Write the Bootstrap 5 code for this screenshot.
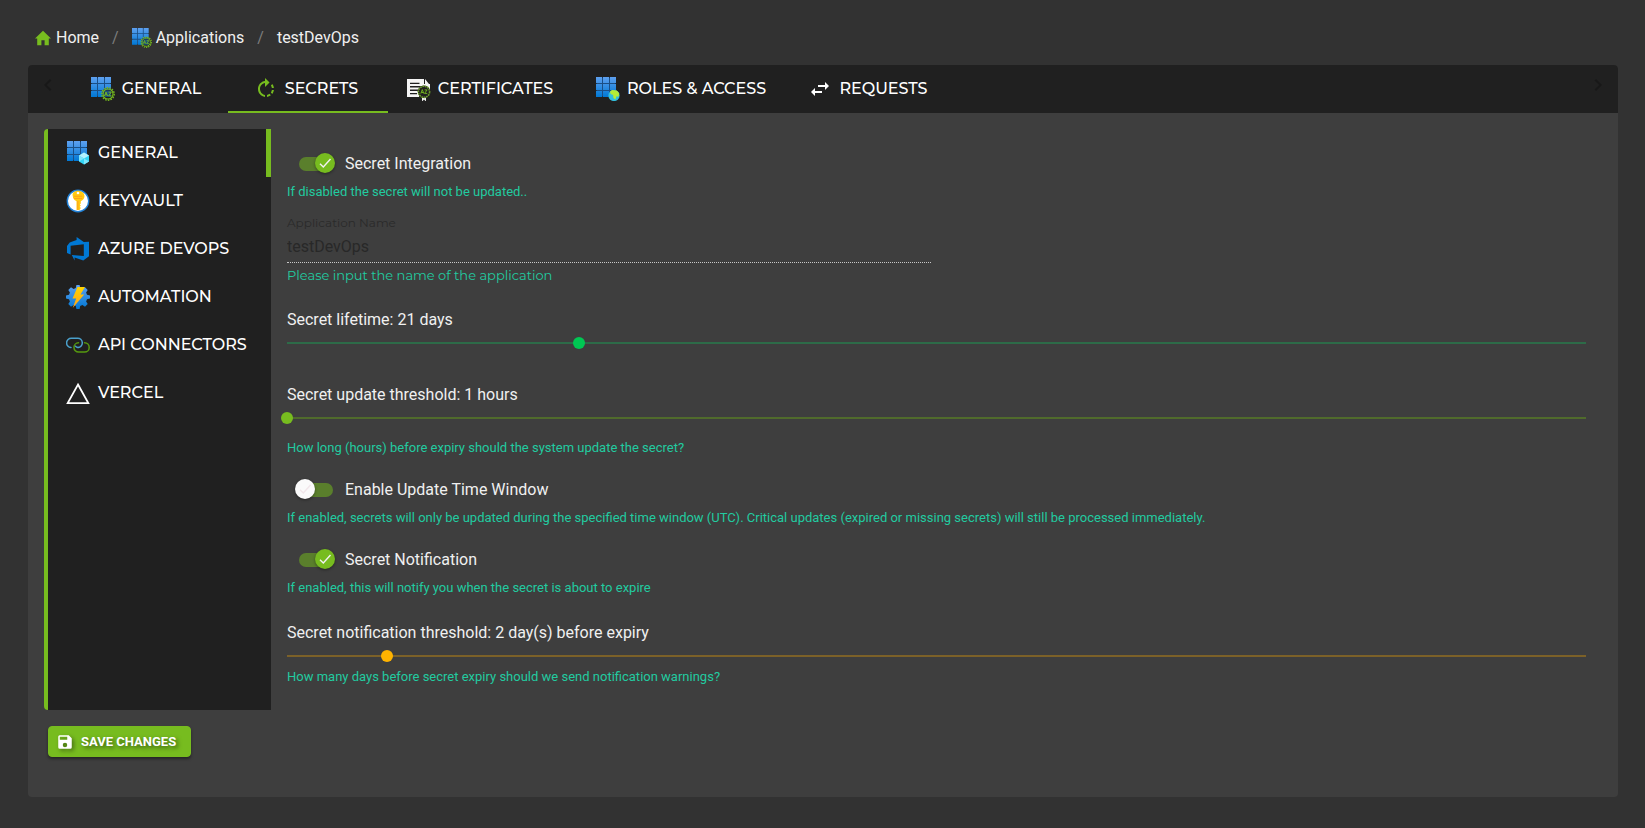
<!DOCTYPE html>
<html lang="en" data-bs-theme="dark">
<head>
<meta charset="utf-8">
<meta name="viewport" content="width=device-width, initial-scale=1">
<title>testDevOps - Secrets</title>
<link href="https://cdn.jsdelivr.net/npm/bootstrap@5.3.0/dist/css/bootstrap.min.css" rel="stylesheet">
<style>
  :root {
    --page: #323232;
    --surface: #3e3e3e;
    --ink-dark: #202020;
    --accent: #77bc1f;
    --hint: #22cba0;
    --text: #f0f0f0;
    --heading-font: Montserrat, Inter, sans-serif;
  }
  body { background: var(--page); color: var(--text); font-family: Roboto, sans-serif; font-size: 16px; line-height: 24px; min-height: 100vh; }
  svg { display: block; flex: none; }
  a { color: inherit; text-decoration: none; }

  .page-shell { padding: 24px 27px 31px 28px; }
  .crumbs { --bs-breadcrumb-margin-bottom: 0; --bs-breadcrumb-divider-color: #7d7d7d; --bs-breadcrumb-item-padding-x: 13px; padding: 2px 6px 15px; }
  .crumbs .breadcrumb-item { display: flex; align-items: center; }
  .crumbs .breadcrumb-item.active { color: var(--text); }
  .crumbs a { display: flex; align-items: center; gap: 4px; }

  .panel { background: var(--surface); border-radius: 4px; overflow: hidden; }
  .tab-bar { background: var(--ink-dark); height: 48px; }
  .scroll-btn { width: 40px; height: 40px; padding: 8px; border: 0; background: none; color: #181818; }
  .tab-link { font-family: var(--heading-font); font-weight: 500; color: #fff; height: 48px; min-width: 160px; padding: 0 18px 0 14px; display: flex; align-items: center; justify-content: center; gap: 7px; border: 0; background: none; white-space: nowrap; }
  .tab-link.active { box-shadow: inset 0 -2px var(--accent); }
  .tab-wide { min-width: 188px; }
  .tab-wider { min-width: 214px; }

  .panel-body { padding: 16px 16px 40px; }
  .side-tabs { width: 227px; flex: none; background: var(--ink-dark); border-left: 4px solid var(--accent); border-radius: 4px 0 0 4px; }
  .side-link { font-family: var(--heading-font); font-weight: 500; color: #fff; height: 48px; padding: 0 16px 0 18px; display: flex; align-items: center; gap: 8px; border: 0; background: none; text-align: left; white-space: nowrap; }
  .side-link.active { box-shadow: inset -5px 0 var(--accent); }

  .settings { padding: 23px 16px 23px; }
  .hint { color: var(--hint); font-size: 13px; line-height: 20px; margin: 0; }
  .hint-alt { font-family: var(--heading-font); }
  .switch-row { display: flex; align-items: center; gap: 10px; height: 24px; padding-left: 8px; margin-bottom: 6px; }

  .toggle-input { appearance: none; position: relative; width: 40px; height: 20px; margin: 0 0 2px; }
  .toggle-input::before { content: ""; position: absolute; inset: 4px 2px 2px 4px; border-radius: 7px; background: #5a7f2c; }
  .toggle-input::after { content: ""; position: absolute; left: 0; top: 0; width: 20px; height: 20px; border-radius: 50%; box-shadow: 0 1px 3px #0006;
    background: #fafafa url("data:image/svg+xml,%3Csvg xmlns='http://www.w3.org/2000/svg' viewBox='0 0 20 20'%3E%3Cpath d='M5 10.7l3.3 3.2L15.5 6' fill='none' stroke='%23f1e6ea' stroke-width='1.4'/%3E%3C/svg%3E"); }
  .toggle-input:checked::after { left: 20px;
    background: #77bc1f url("data:image/svg+xml,%3Csvg xmlns='http://www.w3.org/2000/svg' viewBox='0 0 20 20'%3E%3Cpath d='M5 10.7l3.3 3.2L15.5 6' fill='none' stroke='%23f2f2f2' stroke-width='1.4'/%3E%3C/svg%3E"); }

  .name-row { --bs-gutter-x: 12px; margin-top: 11px; }
  .name-label { font-family: var(--heading-font); font-size: 12px; line-height: 20px; color: #2a2a2a; display: block; }
  .name-input { font-size: 16px; line-height: 24px; width: 100%; height: 30px; padding: 0 0 2px; border: 0; border-bottom: 1px dotted #c8c8c8; border-radius: 0; background: none; color: #282828; display: block; margin-bottom: 2px; }

  .slider-block { margin-top: 23px; }
  .slider-block + .slider-block { margin-top: 29px; }
  .switch-block { margin-top: 20px; }
  .setting-label { display: block; }
  .line-slider { --tone: #00c853; --rail: #2d6b48; appearance: none; display: block; width: calc(100% + 12px); height: 22px; margin: 0 -6px; background: linear-gradient(var(--rail), var(--rail)) center / calc(100% - 12px) 2px no-repeat; }
  .line-slider::-webkit-slider-thumb { appearance: none; width: 12px; height: 12px; border-radius: 50%; background: var(--tone); }
  .slider-lime { --tone: #77bc1f; --rail: #506b2c; margin-bottom: 9px; }
  .slider-amber { --tone: #ffb300; --rail: #7c6128; }

  .save-btn { --bs-btn-color: #fff; --bs-btn-bg: var(--accent); --bs-btn-border-color: var(--accent); --bs-btn-hover-bg: #69a81a; --bs-btn-hover-color: #fff; --bs-btn-padding-x: 7px; --bs-btn-padding-y: 0; --bs-btn-font-size: 13px; --bs-btn-line-height: 29px; --bs-btn-font-weight: 700; --bs-btn-border-radius: 4px;
    display: flex; align-items: center; gap: 7px; min-width: 143px; margin: 16px 0 0 4px; text-shadow: 2px 2px 4px #0008; box-shadow: 0 2px 3px #0006; }
  .save-btn svg { filter: drop-shadow(2px 2px 2px #0006); }
</style>
</head>
<body>
<svg width="0" height="0" class="position-absolute" aria-hidden="true">
  <defs>
    <linearGradient id="blueFade" x1="0" y1="0" x2="0" y2="20" gradientUnits="userSpaceOnUse"><stop offset="0" stop-color="#5ea0ef"/><stop offset="1" stop-color="#0078d4"/></linearGradient>
    <linearGradient id="gearFade" x1="0" y1="0" x2="0" y2="1"><stop offset="0" stop-color="#5ea0ef"/><stop offset="1" stop-color="#0078d4"/></linearGradient>
    <linearGradient id="boltFade" x1="0" y1="0" x2="0" y2="1"><stop offset="0" stop-color="#ffd400"/><stop offset="1" stop-color="#fea11b"/></linearGradient>
    <symbol id="tiles" viewBox="0 0 24 24">
      <path fill="#1b4f86" d="M.5.5h19v19H.5z"/>
      <path fill="url(#blueFade)" d="M0 0h6v6H0zM7 0h6v6H7zM14 0h6v6h-6zM0 7h6v6H0zM7 7h6v6H7zM14 7h6v6h-6zM0 14h6v6H0zM7 14h6v6H7zM14 14h6v6h-6z"/>
    </symbol>
    <symbol id="seal" viewBox="0 0 14 14">
      <circle cx="7" cy="7" r="6.3" fill="#202020" opacity=".5"/>
      <circle cx="7" cy="7" r="6.2" fill="none" stroke="#77bc1f" stroke-width="1.4" stroke-dasharray="1.6 1.1"/>
      <circle cx="7" cy="7" r="5" fill="none" stroke="#77bc1f" stroke-width="1.1"/>
      <path d="M3.4 9L5 5l1.6 4M4 7.8h2M7.6 5.2h2.7L7.6 8.8h2.9" fill="none" stroke="#77bc1f" stroke-width=".9"/>
    </symbol>
    <symbol id="tilesSeal" viewBox="0 0 24 24"><use href="#tiles" width="24" height="24"/><use href="#seal" x="10" y="10" width="14" height="14"/></symbol>
  </defs>
</svg>

<div class="page-shell">
  <nav aria-label="breadcrumb">
    <ol class="breadcrumb crumbs">
      <li class="breadcrumb-item"><a href="#"><svg width="18" height="18" viewBox="0 0 18 18"><path fill="#77bc1f" d="M9 1.8L1 9.6h2.2v6.6h4.2v-5h3.2v5h4.2V9.6H17z"/></svg>Home</a></li>
      <li class="breadcrumb-item"><a href="#"><svg width="20" height="20"><use href="#tilesSeal"/></svg>Applications</a></li>
      <li class="breadcrumb-item active" aria-current="page">testDevOps</li>
    </ol>
  </nav>

  <main class="panel">
    <div class="tab-bar d-flex">
      <button class="scroll-btn" type="button" aria-label="Previous tabs"><svg width="24" height="24" viewBox="0 0 24 24"><path fill="currentColor" d="M15.41 7.41L14 6l-6 6 6 6 1.41-1.41L10.83 12z"/></svg></button>
      <div class="d-flex flex-grow-1" role="tablist">
        <button class="tab-link" type="button" role="tab" aria-selected="false"><svg width="24" height="24"><use href="#tilesSeal"/></svg>GENERAL</button>
        <button class="tab-link active" type="button" role="tab" aria-selected="true"><svg width="24" height="24" viewBox="0 0 24 24"><path fill="#77bc1f" d="M15.55 5.55L11 1v3.07C7.06 4.56 4 7.92 4 12s3.05 7.44 7 7.93v-2.02c-2.84-.48-5-2.94-5-5.91s2.16-5.43 5-5.91V10l4.55-4.45zM19.93 11c-.17-1.39-.72-2.73-1.62-3.89l-1.42 1.42c.54.75.88 1.6 1.02 2.47h2.02zM13 17.9v2.02c1.39-.17 2.74-.71 3.9-1.61l-1.44-1.44c-.75.54-1.59.89-2.46 1.03zm3.89-2.42l1.42 1.41c.9-1.16 1.45-2.5 1.62-3.89h-2.02c-.14.87-.48 1.72-1.02 2.48z"/></svg>SECRETS</button>
        <button class="tab-link tab-wide" type="button" role="tab" aria-selected="false"><svg width="24" height="24" viewBox="0 0 24 24"><path fill="#f5f5f5" d="M0 2h17v5h4v4h-9v9H0z"/><path fill="#f5f5f5" d="M18 2l4 5h-4zM21 7h2v7h-2z"/><path stroke="#202020" stroke-width="1.4" d="M3 6.4h9.500M3 9.800h15M3 13.200h8M3 16.600h7"/><path fill="#eee" d="M15 19h4v5.500l-2-2-2 2z"/><circle cx="17" cy="14.800" r="6.200" fill="#202020"/><circle cx="17" cy="14.800" r="5.600" fill="none" stroke="#6b9a2c" stroke-width="1.600" stroke-dasharray="1.700 .7"/><path d="M13.800 16.600l1.500-4 1.500 4M14.300 15.500h2M17.600 12.900h2.500l-2.500 3.500h2.700" fill="none" stroke="#77bc1f" stroke-width=".9"/></svg>CERTIFICATES</button>
        <button class="tab-link tab-wider" type="button" role="tab" aria-selected="false"><svg width="24" height="24" viewBox="0 0 24 24"><use href="#tiles" width="24" height="24"/><circle cx="18" cy="18.500" r="5.600" fill="#32bedd"/><path fill="#b4ec36" d="M14 14.700l2-1.600 4.800.3 2.400 2.800-.6 3.600-2.200-.5-1 3.200-2-1.400-.3-3-2.500-1z"/></svg>ROLES &amp; ACCESS</button>
        <button class="tab-link" type="button" role="tab" aria-selected="false"><svg width="24" height="24" viewBox="0 0 24 24"><path fill="#fff" d="M6.990 11L3 15l3.990 4v-3H14v-2H6.990v-3zM21 9l-3.990-4v3H10v2h7.010v3L21 9z"/></svg>REQUESTS</button>
      </div>
      <button class="scroll-btn" type="button" aria-label="Next tabs"><svg width="24" height="24" viewBox="0 0 24 24"><path fill="currentColor" d="M10 6L8.590 7.410 13.170 12l-4.580 4.590L10 18l6-6z"/></svg></button>
    </div>

    <form class="panel-body" onsubmit="return false">
      <div class="d-flex">
        <div class="side-tabs d-flex flex-column" role="tablist" aria-orientation="vertical">
          <button class="side-link active" type="button" role="tab" aria-selected="true"><svg width="24" height="24" viewBox="0 0 24 24"><use href="#tiles" x="1" width="24" height="24"/><path fill="#32d4f5" d="M18 11.500l5 3v6l-5 3-5-3v-6z"/><path fill="#b3f1ff" d="M18 11.500l5 3-5 3-5-3z"/><path fill="#7fe6fa" d="M13 14.500l5 3-5 3zM18 17.500l5 3-5 3z"/></svg>GENERAL</button>
          <button class="side-link" type="button" role="tab" aria-selected="false"><svg width="24" height="24" viewBox="0 0 24 24"><circle cx="12" cy="12" r="10.700" fill="#fff" stroke="#2080d6" stroke-width="1.400"/><path fill="#ffca10" d="M12 1.800c3.600 0 6.500 2.300 6.500 5.400 0 2.200-1.500 4-3.700 5v2.300l-1 1 1 1.100-1 1.200 1 1.200-1.300 1.900h-3V12.200c-2.200-1-3.700-2.800-3.700-5C5.800 4.100 8.400 1.800 12 1.800z"/><path fill="#fea11b" d="M8 6.800h8.200v1H8zM8 8.900h8.200v1H8zM11.300 12h1.100v9h-1.100z"/><circle cx="12" cy="4" r="1.300" fill="#fff"/></svg>KEYVAULT</button>
          <button class="side-link" type="button" role="tab" aria-selected="false"><svg width="24" height="24" viewBox="0 0 24 24"><path fill="#0078d4" d="M23 4.700v14.500l-5.700 4.300-8.700-3.100v3.100L5.800 18l12 .9V7.200L4.600 8.700v8.900L1 16V9.100l2.700-3.500 6.900-2.500V0l7.200 4.900z"/></svg>AZURE DEVOPS</button>
          <button class="side-link" type="button" role="tab" aria-selected="false"><svg width="24" height="24" viewBox="0 0 24 24"><g fill="url(#gearFade)"><path d="M9.800 3L10.400 0h3.200l.6 3 2.200.9L19 2.300 21.700 5l-1.600 2.600.9 2.200 3 .6v3.200l-3 .6-.9 2.200 1.600 2.600L19 21.700l-2.600-1.600-2.200.9-.6 3h-3.200l-.6-3-2.200-.9L5 21.700 2.300 19l1.600-2.600-.9-2.200-3-.6v-3.200l3-.6.9-2.200L2.300 5 5 2.300l2.600 1.600z"/></g><path fill="url(#boltFade)" d="M11.500 2H19l-4.500 7.500h3.700L6.700 23l3.500-9.500H6.500z"/></svg>AUTOMATION</button>
          <button class="side-link" type="button" role="tab" aria-selected="false"><svg width="24" height="24" viewBox="0 0 24 24" fill="none" stroke-width="1.500" stroke-linecap="round"><path stroke="#4aa0cb" d="M5 14.500A4.600 4.600 0 0 1 5.400 5.300h6a4.600 4.600 0 0 1 .6 9.200"/><path stroke="#56990f" d="M12.500 9.800a4.600 4.600 0 0 0 .1 9.200h6a4.600 4.600 0 0 0 0-9.200"/><path stroke="#4aa0cb" d="M12 14.500c-1.200 0-2-.5-2.500-1.300"/></svg>API CONNECTORS</button>
          <button class="side-link" type="button" role="tab" aria-selected="false"><svg width="24" height="24" viewBox="0 0 24 24"><path fill="none" stroke="#fff" stroke-width="1.800" d="M12 3.500l10.300 18.600H1.700z"/></svg>VERCEL</button>
        </div>

        <div class="settings flex-grow-1">
          <div class="switch-row"><input class="toggle-input" type="checkbox" role="switch" id="integration" checked><label for="integration">Secret Integration</label></div>
          <p class="hint">If disabled the secret will not be updated..</p>

          <div class="row name-row">
            <div class="col-6">
              <label class="name-label" for="appName">Application Name</label>
              <input class="name-input" id="appName" type="text" value="testDevOps" disabled>
              <p class="hint hint-alt">Please input the name of the application</p>
            </div>
          </div>

          <div class="slider-block">
            <label class="setting-label" for="lifetime">Secret lifetime: 21 days</label>
            <input class="line-slider" id="lifetime" type="range" min="1" max="90" value="21">
          </div>

          <div class="slider-block">
            <label class="setting-label" for="updateThreshold">Secret update threshold: 1 hours</label>
            <input class="line-slider slider-lime" id="updateThreshold" type="range" min="1" max="24" value="1">
            <p class="hint">How long (hours) before expiry should the system update the secret?</p>
          </div>

          <div class="switch-block">
            <div class="switch-row"><input class="toggle-input" type="checkbox" role="switch" id="timeWindow"><label for="timeWindow">Enable Update Time Window</label></div>
            <p class="hint">If enabled, secrets will only be updated during the specified time window (UTC). Critical updates (expired or missing secrets) will still be processed immediately.</p>
          </div>

          <div class="switch-block">
            <div class="switch-row"><input class="toggle-input" type="checkbox" role="switch" id="notify" checked><label for="notify">Secret Notification</label></div>
            <p class="hint">If enabled, this will notify you when the secret is about to expire</p>
          </div>

          <div class="slider-block">
            <label class="setting-label" for="notifyThreshold">Secret notification threshold: 2 day(s) before expiry</label>
            <input class="line-slider slider-amber" id="notifyThreshold" type="range" min="1" max="14" value="2">
            <p class="hint">How many days before secret expiry should we send notification warnings?</p>
          </div>
        </div>
      </div>
      <button class="btn save-btn" type="submit"><svg width="18" height="18" viewBox="0 0 24 24"><path fill="#fff" fill-rule="evenodd" d="M17 3H5a2 2 0 0 0-2 2v14a2 2 0 0 0 2 2h14a2 2 0 0 0 2-2V7zm-5 16a3 3 0 1 1 0-6 3 3 0 0 1 0 6zm3-10H5V5h10z"/></svg>SAVE CHANGES</button>
    </form>
  </main>
</div>
<script src="https://cdn.jsdelivr.net/npm/bootstrap@5.3.0/dist/js/bootstrap.bundle.min.js"></script>
</body>
</html>
